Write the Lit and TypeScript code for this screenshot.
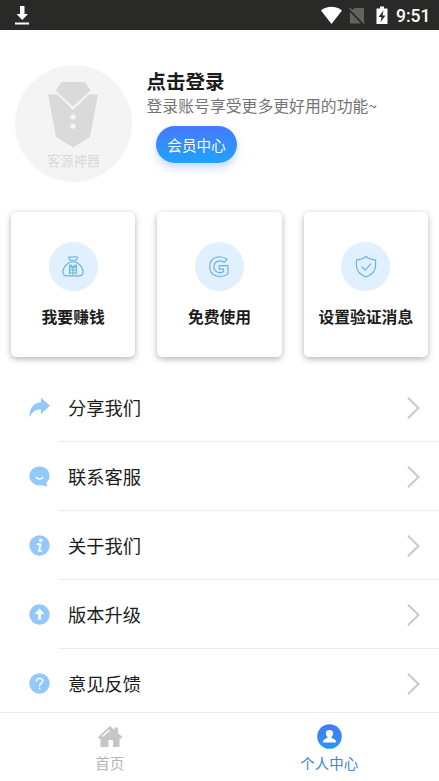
import { LitElement, html, css, svg } from "lit";
import { customElement } from "lit/decorators.js";

const icons = {
  money: svg`<path d="M7.200 1.500c2.800 1 5.800-.800 8.600 0 1 1.500-.500 2.800-1.500 3.500H8.700C7.500 4 6.500 3 7.200 1.500z M7.500 6.800h8 M8.200 7C4 9.500 1 13 1 17c0 2.900 1.600 4.300 4.200 4.300h12.600c2.600 0 4.200-1.400 4.200-4.300 0-4-3-7.500-7.200-10"/><path d="M8.500 9.200l3 3 3-3 M11.500 12v8 M8 12.200h7 M8 15.200h7 M8 18.300h7 M8 10v9.500 M15 10v9.500"/>`,
  g: svg`<path d="M19.800 4l-2.600 3.300C12.500 3.800 6.200 6.200 6.200 11.700c0 5.500 5.600 7.500 10 5.300v-2.800h-4.400v-3.600h9v8.600C13 24.800 1.800 21.500 1.800 11.700 1.800 1.500 12.500-1.200 19.800 4z"/>`,
  shield: svg`<path d="M11.500 1c3 2.400 6.300 3.500 10 3.500V11c0 5.500-4 9-10 11.500C5.500 20 1.500 16.500 1.500 11V4.500C5.200 4.500 8.500 3.400 11.500 1z M7 11.500l3.700 3.700 6-6.700"/>`,
};

const rowIcons = {
  share: svg`<path d="M12 .800l9 8-9 8.200v-4.600C7 12.400 3.500 14 .700 20.300.200 11.500 4 5.600 12 5.200z"/>`,
  chat: svg`<path d="M10.500.500c6 0 10 4 10 9.300 0 3-1.100 5.300-3.200 7l1 3.700-4.600-1.100C7 20.500.500 16.500.500 10 .500 4.500 4.800.500 10.500.500z"/><path class="line thin" d="M7.200 11.300c1.300 2.200 5.300 2.200 6.600 0"/>`,
  info: svg`<circle cx="10.500" cy="10.500" r="10.200"/><circle class="w" cx="11.800" cy="5.300" r="1.700"/><path class="line" d="M8.600 9.200h2.900l-1.500 6.700h2.300"/>`,
  up: svg`<circle cx="10.500" cy="10.500" r="10.200"/><path class="w" d="M10.500 4.500l5 5.500h-3.600v5.700H9.100V10H5.500z"/>`,
  help: svg`<circle cx="10.500" cy="10.500" r="10.200"/><path class="line thin" d="M7.500 8.200c0-4 6.200-3.800 6.200-.100 0 2.300-3.100 2.200-3.100 4.700"/><circle class="w" cx="10.600" cy="15.400" r=".900"/>`,
};

const cards = [
  { label: "我要赚钱", icon: icons.money },
  { label: "免费使用", icon: icons.g },
  { label: "设置验证消息", icon: icons.shield },
];

const rows = [
  { label: "分享我们", icon: rowIcons.share },
  { label: "联系客服", icon: rowIcons.chat },
  { label: "关于我们", icon: rowIcons.info },
  { label: "版本升级", icon: rowIcons.up },
  { label: "意见反馈", icon: rowIcons.help },
];

@customElement("app-root")
export class AppRoot extends LitElement {
  static styles = css`
    :host {
      display: flex;
      flex-direction: column;
      height: 781px;
      overflow: hidden;
      background: #fff;
      color: #1c1c1c;
      font-family: "Noto Sans CJK SC", sans-serif;
    }
    * { box-sizing: border-box; }
    svg { display: block; flex: none; }
    .status {
      flex: none;
      height: 30px;
      background: #292a28;
      display: flex;
      align-items: center;
      padding: 0 10px 0 14px;
      color: #fff;
    }
    .right { margin-left: auto; display: flex; align-items: center; }
    .time { font: 500 17.500px/30px Roboto, sans-serif; margin-left: 2px; padding-top: 2px; width: 33px; white-space: nowrap; }
    .profile { flex: none; height: 182px; padding: 35px 0 0 14.500px; display: flex; }
    .avatar {
      width: 117px; height: 117px; border-radius: 50%; background: #f4f4f4;
      display: flex; flex-direction: column; align-items: center; padding-top: 16px;
    }
    .brand { font-size: 13.300px; line-height: 20px; color: #dadada; margin-top: 3px; padding-left: 1px; }
    .who { margin-left: 15px; }
    .name { font-size: 19.500px; font-weight: 700; line-height: 28px; margin-top: 2px; }
    .desc { font-size: 15.850px; line-height: 22px; color: #747474; white-space: nowrap; }
    .vip {
      width: 81px; height: 37px; margin: 9px 0 0 9.500px; border-radius: 19px;
      background: linear-gradient(#4779fb, #1fa2ff); color: #fff;
      font-size: 14.600px; line-height: 38px; text-align: center;
      box-shadow: 0 5px 9px #4a80ff48;
    }
    .cards { flex: none; display: flex; gap: 22px; padding: 0 11px; height: 161px; }
    .card {
      flex: 1; height: 145px; border-radius: 5px; background: #fff;
      box-shadow: 0 2px 6px #0000004d;
      display: flex; flex-direction: column; align-items: center; padding-top: 30px;
    }
    .disc {
      width: 49px; height: 49px; border-radius: 50%; background: #e0f0fe;
      display: grid; place-items: center;
    }
    .disc svg { fill: none; stroke: #66b3de; stroke-width: 1.200; stroke-linejoin: round; }
    .label { font-size: 15.800px; font-weight: 700; line-height: 24px; margin-top: 14px; white-space: nowrap; }
    .list { flex: none; height: 339px; overflow: hidden; }
    .row { display: flex; height: 69px; align-items: center; padding-left: 29px; }
    .row svg { fill: #93c9fa; }
    .row .line { fill: none; stroke: #fff; stroke-width: 1.900; stroke-linecap: round; stroke-linejoin: round; }
    .row .thin { stroke-width: 1.400; }
    .row .w { fill: #fff; }
    .body {
      flex: 1; height: 69px; margin-left: 8px; padding: 0 19px 0 10px;
      border-bottom: 1px solid #ececec;
      display: flex; align-items: center; justify-content: space-between;
      font-size: 18.300px;
    }
    .row .chev { fill: none; stroke: #c9c9c9; stroke-width: 2; margin-top: 1px; }
    .tabs { flex: none; height: 69px; border-top: 1px solid #eeeeee; display: flex; }
    .tab {
      flex: 1; display: flex; flex-direction: column; align-items: center;
      padding-top: 11px; font-size: 14.500px; line-height: 22px; color: #b5b5b5;
    }
    .tab span { margin-top: 3px; }
    .active { color: #4385dc; }
  `;

  render() {
    return html`
      <div class="status">
        <svg width="16" height="22" viewBox="0 0 16 22" fill="#fff"><path d="M6 2h4.500v8H14l-5.800 6L2.500 10H6zM1 18.500h14v2H1z"/></svg>
        <div class="right">
          <svg width="74" height="20" viewBox="0 0 74 20">
            <path fill="#fff" d="M1 5.500C7 .500 16 .500 22 5.500L11.500 19z"/>
            <path fill="#626361" d="M35 3h9v14.500L31 5.500zM30 7l11 11.500H30z"/>
            <path d="M29.500 3l15 15.500" stroke="#626361" stroke-width="1.500"/>
            <path fill="#fff" d="M60 1.500h4v2h3.500V19h-11V3.500H60z"/>
            <path fill="#292a28" d="M63.500 5.500l-5 6.500h3l-1 5 5-6.500h-3z"/>
          </svg>
          <div class="time">9:51</div>
        </div>
      </div>
      <div class="profile">
        <div class="avatar">
          <svg width="52" height="67" viewBox="0 0 52 67" fill="#dadada">
            <path d="M14.500 1h23l6 8.500L26 25.500 8.500 9.500z"/>
            <path d="M1 13.500h9L26 29l16-15.500h9L43 56l-17 10.500L9 56z"/>
            <circle cx="26" cy="36" r="2.600" fill="#f6f6f6"/><circle cx="26" cy="45" r="2.600" fill="#f6f6f6"/>
          </svg>
          <div class="brand">客源神器</div>
        </div>
        <div class="who">
          <div class="name">点击登录</div>
          <div class="desc">登录账号享受更多更好用的功能~</div>
          <div class="vip">会员中心</div>
        </div>
      </div>
      <div class="cards">
        ${cards.map((c) => html`<div class="card">
          <div class="disc"><svg width="22" height="23" viewBox="0 0 23 23">${c.icon}</svg></div>
          <div class="label">${c.label}</div>
        </div>`)}
      </div>
      <div class="list">
        ${rows.map((r) => html`<div class="row">
          <svg width="21" height="21" viewBox="0 0 21 21">${r.icon}</svg>
          <div class="body">${r.label}<svg class="chev" width="13" height="22" viewBox="0 0 13 22"><path d="M1 .800L11.500 11 1 21.200"/></svg></div>
        </div>`)}
      </div>
      <div class="tabs">
        <div class="tab">
          <svg width="26" height="25" viewBox="0 0 26 25" fill="#c6c6c6">
            <path d="M1 13L13 2l4.500 4V3.500H21V9l4.500 4-1.500 1.500h-1.500V23H16v-7h-4.500v7h-8v-8.500H2z"/>
            <path d="M5.500 12.500L12.500 6" stroke="#fff" stroke-width="1.500"/>
          </svg>
          <span>首页</span>
        </div>
        <div class="tab active">
          <svg width="25" height="25" viewBox="0 0 25 25">
            <defs><linearGradient id="u" x2="0" y2="1"><stop stop-color="#4678f8"/><stop offset="1" stop-color="#2798fc"/></linearGradient></defs>
            <circle cx="12.500" cy="12.500" r="12.300" fill="url(#u)"/>
            <path fill="#fff" d="M12.500 6c4.600 0 4.200 5.300 1.900 7.200 0 1.200 4.800 1.500 4.800 5.300H5.800c0-3.800 4.800-4.100 4.800-5.300C8.300 11.300 7.900 6 12.500 6z"/>
          </svg>
          <span>个人中心</span>
        </div>
      </div>
    `;
  }
}
